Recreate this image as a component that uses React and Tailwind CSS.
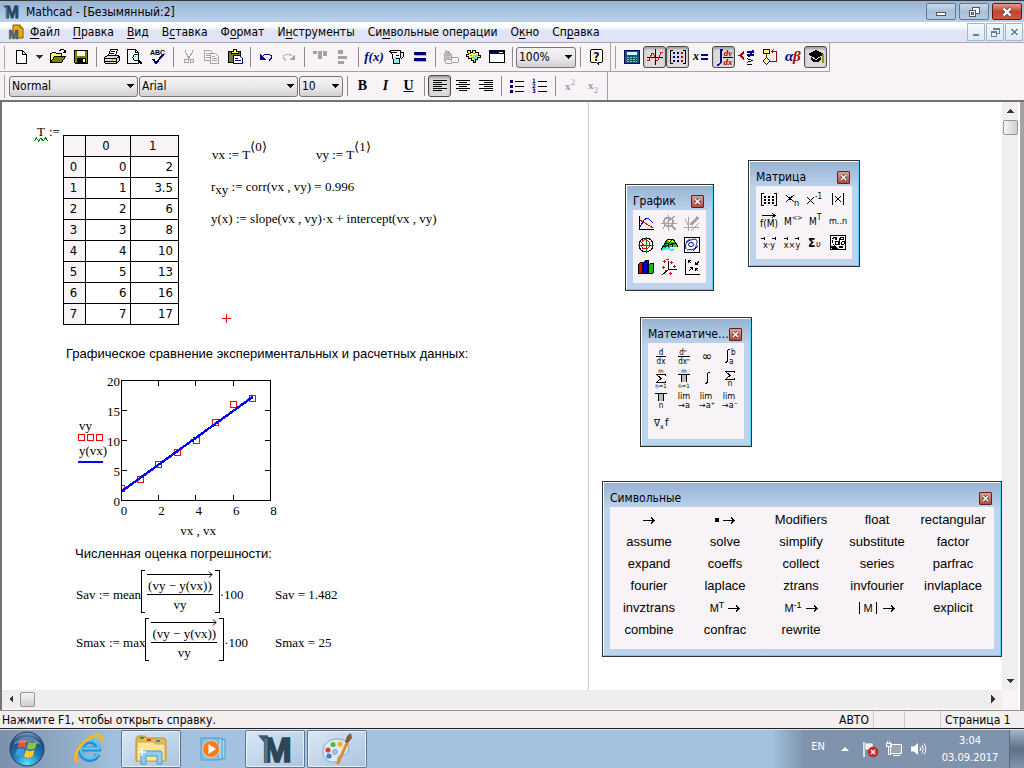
import React from "react";

const UI = "font-['DejaVu_Sans_Condensed','Noto_Sans',sans-serif]";
const MATH = "font-['Liberation_Serif',serif] text-[13px] leading-[16px] whitespace-pre";

/* ---------- drawing helpers ---------- */

function Ico({ w = 18, h = 18, smooth, children }) {
  return (
    <svg
      width={w}
      height={h}
      viewBox={`0 0 ${w} ${h}`}
      fill="none"
      stroke="#000"
      shapeRendering={smooth ? "auto" : "crispEdges"}
      aria-hidden="true"
      className="shrink-0 overflow-visible"
    >
      {children}
    </svg>
  );
}

function T({ x, y, s = 9, f = "DejaVu Sans Condensed", c = "#000", b, i, a, children }) {
  return (
    <text
      x={x}
      y={y}
      fontSize={s}
      fontFamily={`'${f}', sans-serif`}
      fill={c}
      stroke="none"
      fontWeight={b ? 700 : 400}
      fontStyle={i ? "italic" : "normal"}
      textAnchor={a ? "middle" : "start"}
    >
      {children}
    </text>
  );
}

function MathcadLogo({ size }) {
  return (
    <svg width={size} height={size} viewBox="0 0 32 32" aria-hidden="true" className="shrink-0 overflow-visible">
      <path d="M0 3 H9 L12 9 H5 Z" fill="#3f5a6c" />
      <text x="18" y="28" textAnchor="middle" fontFamily="'Liberation Sans', sans-serif" fontWeight="700" fontSize="33" fill="#2c4557" stroke="#2c4557" strokeWidth="1.600">M</text>
      <path d="M6 6 L9 6 V28 H6 Z" fill="#587487" />
    </svg>
  );
}

function Btn({ label, pressed, children }) {
  return (
    <button
      type="button"
      aria-label={label}
      title={label}
      className={
        "flex h-[22px] w-[23px] shrink-0 items-center justify-center " +
        (pressed ? "rounded-[3px] border border-[#4c4a4c] bg-[#dcd9dc] shadow-[inset_0_2px_2px_#a3a1a3]" : "")
      }
    >
      {children}
    </button>
  );
}

function Sep() {
  return (
    <span className="flex h-[20px] w-2 shrink-0 justify-center">
      <span className="w-px bg-[#8d8a8e]" />
    </span>
  );
}

function Grip() {
  return <span className="ml-1 mr-1 h-[23px] w-px shrink-0 bg-[#a5a2a6]" />;
}

function Combo({ label, value, options, className }) {
  return (
    <span className={"relative flex h-[21px] shrink-0 " + className}>
      <select
        aria-label={label}
        defaultValue={value}
        className={
          "h-full w-full appearance-none rounded-[3px] border border-[#77747a] bg-linear-to-b from-[#f4f2f4] via-[#ebe9eb] to-[#d2d0d3] pl-[2px] text-[12px] leading-[18px] text-black outline-none " + UI
        }
      >
        {options.map((o) => (
          <option key={o}>{o}</option>
        ))}
      </select>
      <svg width="8" height="4" viewBox="0 0 8 4" className="pointer-events-none absolute right-[4px] top-[8px]" shapeRendering="crispEdges" aria-hidden="true">
        <path d="M0 0 H8 L4 4 Z" fill="#000" />
      </svg>
    </span>
  );
}

/* ---------- toolbar icons ---------- */

const IconNew = (
  <Ico>
    <path d="M4.5 2.5 H10.5 L14.5 6.5 V15.5 H4.5 Z" fill="#fff" />
    <path d="M10.5 2.5 V6.5 H14.5" />
  </Ico>
);
const IconOpen = (
  <Ico>
    <path d="M1.5 14.5 V5.5 H2.5 L3.5 4.5 H6.5 L7.5 5.5 H12.5 V8.5" fill="#ffff7a" />
    <path d="M1.5 14.5 L5.5 8.5 H16.5 L12.5 14.5 Z" fill="#808000" />
    <path d="M10.5 2.5 L12.5 1.5 H14.5 L16.5 4.5 M14 4.5 H17 M16.5 2 V4" />
  </Ico>
);
const IconSave = (
  <Ico>
    <path d="M2.5 2.5 H15.5 V15.5 H3.5 L2.5 14.5 Z" fill="#808000" />
    <rect x="5" y="3" width="8" height="5" fill="#f7f3f7" stroke="none" />
    <rect x="5" y="10" width="9" height="5" fill="#000" stroke="none" />
    <rect x="11" y="11" width="2" height="3" fill="#fff" stroke="none" />
  </Ico>
);
const IconPrint = (
  <Ico>
    <path d="M5.5 7.5 L7.5 1.5 H14.5 L12.5 7.5 Z" fill="#fff" />
    <path d="M8 3.5 H12 M7 5.5 H11" />
    <path d="M1.5 9.5 L4.5 7.5 H14.5 L16.5 8.5 V12.5 L13.5 15.5 H2.5 L1.5 14.5 Z" fill="#dcdcdc" />
    <path d="M1.5 10.5 H13.5 L16.5 8.5 M13.5 10.5 V15.5 M2 13.5 H13" />
    <rect x="8" y="11" width="3" height="2" fill="#e0d000" stroke="none" />
  </Ico>
);
const IconPreview = (
  <Ico>
    <path d="M1.5 1.5 H9.5 L12.5 4.5 V15.5 H1.5 Z" fill="#fff" />
    <path d="M9.5 1.5 V4.5 H12.5" />
    <circle cx="10" cy="9.5" r="3" fill="#c8ffff" />
    <path d="M12 12 L16 16" strokeWidth="2" />
    <path d="M9 8.5 H10" stroke="#00e0e0" />
  </Ico>
);
const IconSpell = (
  <Ico>
    <T x={1} y={7} s={7} b f="Liberation Sans">ABC</T>
    <path d="M4 11 L7 15 L14 7" stroke="#00008b" strokeWidth="2" />
  </Ico>
);
const IconCut = (
  <Ico>
    <g stroke="#a5a2a6">
      <path d="M5.5 2 V4 L9.5 11 M12.5 2 V4 L8.5 11" />
      <circle cx="6.5" cy="13" r="2" />
      <circle cx="12" cy="13" r="2" />
    </g>
  </Ico>
);
const IconCopy = (
  <Ico>
    <g stroke="#a5a2a6">
      <path d="M1.5 2.5 H7.5 L10.5 5.5 V12.5 H1.5 Z M3 5.5 H7 M3 7.5 H7 M3 9.5 H7" />
      <path d="M7.5 5.5 H12.5 L15.5 8.5 V15.5 H7.5 Z" fill="#f7f3f7" />
      <path d="M9 8.5 H12 M9 10.5 H14 M9 12.5 H14" />
    </g>
  </Ico>
);
const IconPaste = (
  <Ico>
    <rect x="2.5" y="3.5" width="12" height="11" fill="#77773a" />
    <path d="M5.5 5.5 V3.5 H7.5 V1.5 H10.5 V3.5 H12.5 V5.5 Z" fill="#ffff4d" />
    <path d="M7.5 7.5 H13.5 L16.5 10.5 V15.5 H7.5 Z" fill="#fff" stroke="#00008b" />
    <path d="M9 10.5 H12 M9 12.5 H15" stroke="#00008b" />
  </Ico>
);
const IconUndo = (
  <Ico>
    <path d="M6 8 L8 6.5 H12 L14.5 8 V10 L12 12.5" stroke="#00008b" />
    <path d="M3 6 V12 H9 Z" fill="#00008b" stroke="none" />
  </Ico>
);
const IconRedo = (
  <Ico>
    <path d="M12 8 L10 6.5 H6 L3.5 8 V10 L6 12.5" stroke="#b5b2b6" />
    <path d="M15 6 V12 H9 Z" fill="#a5a2a6" stroke="none" />
  </Ico>
);
const IconAlignTop = (
  <Ico>
    <g fill="#a5a2a6" stroke="none">
      <rect x="2" y="3" width="4" height="3" />
      <rect x="7" y="3" width="4" height="8" />
      <rect x="12" y="3" width="4" height="5" />
    </g>
  </Ico>
);
const IconAlignLeft2 = (
  <Ico>
    <g fill="#a5a2a6" stroke="none">
      <rect x="4" y="2" width="5" height="4" />
      <rect x="4" y="8" width="9" height="3" />
      <rect x="4" y="13" width="6" height="3" />
    </g>
  </Ico>
);
const IconFx = (
  <Ico>
    <T x={9} y={13} s={13} b i a f="Liberation Serif" c="#00007b">f(x)</T>
  </Ico>
);
const IconCup = (
  <Ico>
    <path d="M1.5 3.5 L3.500 2.500 H12.5 V4 L11.5 15.5 H5.5 L4.5 6.5 Z" fill="#fff" />
    <path d="M6 9 H11 V15 H6 Z" fill="#8fe8e8" stroke="none" />
    <path d="M12.5 4.5 H15.5 V8.5 L12.5 11.5 M3 4.5 H9 M8 7.5 H11 M8 10.5 H11" />
  </Ico>
);
const IconEq = (
  <Ico>
    <rect x="3" y="4" width="12" height="3" fill="#00007b" stroke="none" />
    <rect x="3" y="10" width="12" height="3" fill="#00007b" stroke="none" />
    <path d="M4 7.5 H16 M4 13.5 H16" stroke="#b5b2b6" />
  </Ico>
);
const IconLink = (
  <Ico>
    <g stroke="#a5a2a6">
      <path d="M2.5 5.5 L4.5 2.5 L9.5 6.5 V12.5 H2.5 Z" fill="#cbc8cc" />
      <path d="M4 5.5 H7 M4 7.5 H8 M4 9.5 H7" />
      <rect x="3.5" y="11.5" width="7" height="4" rx="2" fill="#f7f3f7" />
      <rect x="9.5" y="9.5" width="7" height="5" rx="2" fill="#f7f3f7" />
    </g>
  </Ico>
);
const IconComp = (
  <Ico>
    <path d="M2.5 2.5 H5.5 V4.5 H7.5 V2.5 H10.5 V4.5 H13.5 V7.5 H15.5 V9.5 H12.5 V11.5 H10.5 V14.5 H8.5 V12.5 H6.5 V10.5 H3.5 V8.5 H1.5 V6.5 H3.5 Z" fill="#ffff66" />
    <path d="M8 7 H13 V9 H12 V11 H10 V14 H9 V12 H8 Z" fill="#5fe5e5" stroke="none" />
    <path d="M4 5.5 H6 M8 5.5 H10 M5 7.5 H7 M6 9.5 H8" stroke="#9a9a30" />
  </Ico>
);
const IconWin = (
  <Ico>
    <rect x="1.5" y="2.5" width="15" height="12" fill="#fff" />
    <rect x="2" y="3" width="14" height="3" fill="#00007b" stroke="none" />
    <path d="M11 4.5 H15" stroke="#fff" />
  </Ico>
);
const IconHelp = (
  <Ico>
    <path d="M3.5 2.5 L4.5 1.5 H14.5 L15.500 2.500 V13.5 L14.5 14.5 H12 L11.5 16.5 L9.5 14.5 H4.5 L3.5 13.5 Z" fill="#fff" />
    <path d="M5 3 H14 V13 H5 Z" fill="#ffffc4" stroke="none" />
    <T x={9.5} y={13} s={12} b a c="#00007b">?</T>
  </Ico>
);
const IconCalc = (
  <Ico>
    <rect x="1.5" y="2.5" width="15" height="13" fill="#155a6b" stroke="#00006b" />
    <rect x="4" y="4" width="10" height="3" fill="#c8ffff" stroke="none" />
    <path d="M4 9.5 H14 M4 11.5 H14 M4 13.5 H14" stroke="#62d0d0" strokeDasharray="2 1" />
  </Ico>
);
const IconGraph = (
  <Ico>
    <path d="M9.5 1 V17 M1 9.5 H17" />
    <path d="M1 12.5 H3 L6 5 H7 L10 12 H12 L15 4 H17" stroke="#e00000" />
  </Ico>
);
const IconMatrix = (
  <Ico>
    <path d="M4 2.5 H1.5 V15.5 H4 M14 2.5 H16.5 V15.5 H14" />
    <path d="M5 4 V14" stroke="#00007b" strokeWidth="2" strokeDasharray="2 2" />
    <path d="M9 4 V14" stroke="#00007b" strokeWidth="2" strokeDasharray="2 2" />
    <path d="M13 4 V14" stroke="#b00000" strokeWidth="2" strokeDasharray="2 2" />
  </Ico>
);
const IconXeq = (
  <Ico>
    <T x={1} y={12} s={12} b i f="Liberation Serif">x</T>
    <path d="M9 7 H16 M9 11 H16" stroke="#00007b" strokeWidth="2" />
  </Ico>
);
const IconCalculus = (
  <Ico>
    <path d="M8 1.5 H6.5 L5.5 3 V15 L4 16.5 H2" stroke="#00007b" strokeWidth="2" />
    <T x={13} y={8} s={9} b i a f="Liberation Serif" c="#a00000">dy</T>
    <path d="M8 9.5 H18" />
    <T x={13} y={17} s={9} b i a f="Liberation Serif" c="#a00000">dx</T>
  </Ico>
);
const IconBool = (
  <Ico>
    <path d="M6 4 L2 7.5 L6 11" stroke="#a00000" strokeWidth="2" />
    <path d="M9 4 H16 M9 7 H16 M15 2 L11 9" stroke="#00007b" strokeWidth="1.5" />
    <path d="M9 10.5 L14 12.5 L9 14.5 M9 16.5 H14" />
  </Ico>
);
const IconProg = (
  <Ico>
    <rect x="2.5" y="1.5" width="6" height="4" fill="#ffff7a" stroke="#00007b" />
    <path d="M5.5 6 V10" stroke="#a00000" />
    <path d="M5.5 9.5 L9 13 L5.5 16.5 L2 13 Z" fill="#ffff9a" stroke="#00007b" />
    <path d="M9 13.5 H15.5 V3.5 H11 M12.5 1.5 L10.5 3.5 L12.5 5.5" stroke="#a00000" />
  </Ico>
);
const IconGreek = (
  <Ico>
    <T x={1} y={13} s={15} b i f="Liberation Serif" c="#00007b">α</T>
    <T x={9} y={13} s={15} b i f="Liberation Serif" c="#a00000">β</T>
  </Ico>
);
const IconHat = (
  <Ico>
    <path d="M9 2 L17 6 L9 11 L1 6 Z" fill="#000" stroke="none" />
    <path d="M4 9 V12 L7 14 H11 L14 12 V9 L9 12 Z" fill="#000" stroke="none" />
    <path d="M16 6 V15" stroke="#a09000" strokeWidth="2" />
  </Ico>
);

function Lines({ rows }) {
  return (
    <Ico>
      {rows.map(([x, w], k) => (
        <path key={k} d={`M${x} ${3.5 + k * 2} H${x + w}`} />
      ))}
    </Ico>
  );
}
const IconLeft = <Lines rows={[[2, 14], [2, 9], [2, 14], [2, 9], [2, 14], [2, 9]]} />;
const IconCenter = <Lines rows={[[2, 14], [5, 8], [2, 14], [5, 8], [2, 14], [5, 8]]} />;
const IconRight = <Lines rows={[[2, 14], [7, 9], [2, 14], [7, 9], [2, 14], [7, 9]]} />;
const IconBullets = (
  <Ico>
    <path d="M7 4.5 H16 M7 9.5 H16 M7 14.5 H16" />
    <path d="M2 3 H5 V6 H2 Z M2 8 H5 V11 H2 Z M2 13 H5 V16 H2 Z" fill="#00007b" stroke="none" />
  </Ico>
);
const IconNumbers = (
  <Ico>
    <path d="M7 4.5 H16 M7 9.5 H16 M7 14.5 H16" />
    <T x={1} y={6} s={6} b c="#00007b">1</T>
    <T x={1} y={11} s={6} b c="#00007b">2</T>
    <T x={1} y={16} s={6} b c="#00007b">3</T>
  </Ico>
);
const IconSup = (
  <Ico>
    <T x={3} y={13} s={11} b f="Liberation Serif" c="#9c999d">x</T>
    <T x={9} y={8} s={8} f="Liberation Serif" c="#9c999d">2</T>
  </Ico>
);
const IconSub = (
  <Ico>
    <T x={3} y={12} s={11} b f="Liberation Serif" c="#9c999d">x</T>
    <T x={9} y={16} s={8} f="Liberation Serif" c="#9c999d">2</T>
  </Ico>
);

/* ---------- window chrome ---------- */

function TitleBar() {
  return (
    <header className="flex h-[22px] items-center border-t border-[#3a3a3c] bg-linear-to-b from-[#98b4d4] to-[#bbd1ea] pl-[3px]">
      <MathcadLogo size={16} />
      <h1 className={"ml-[7px] grow text-[12px] leading-[18px] text-black " + UI}>Mathcad - [Безымянный:2]</h1>
      <div className="mr-[2px] flex gap-[3px]">
        <button type="button" aria-label="Свернуть" className="flex h-[17px] w-[30px] items-center justify-center rounded-[2px] border border-[#5f7893] bg-linear-to-b from-[#c9d9ea] via-[#a9bfd8] to-[#b4c9e0]">
          <Ico w={12} h={12}><rect x="1.5" y="6.5" width="9" height="3" fill="#fff" stroke="#555" /></Ico>
        </button>
        <button type="button" aria-label="Восстановить" className="flex h-[17px] w-[30px] items-center justify-center rounded-[2px] border border-[#5f7893] bg-linear-to-b from-[#c9d9ea] via-[#a9bfd8] to-[#b4c9e0]">
          <Ico w={12} h={12}>
            <rect x="4.5" y="1.5" width="7" height="6" fill="#fff" stroke="#555" />
            <rect x="1.5" y="4.5" width="6" height="6" fill="#fff" stroke="#555" />
            <rect x="3.5" y="6.5" width="2" height="2" fill="#a9bfd8" stroke="#555" />
          </Ico>
        </button>
        <button type="button" aria-label="Закрыть" className="flex h-[17px] w-[30px] items-center justify-center rounded-[2px] border border-[#571a15] bg-linear-to-b from-[#e09a8c] via-[#c3442f] to-[#d1583f]">
          <Ico w={12} h={12} smooth>
            <path d="M2.5 2.5 L9.5 9.5 M9.5 2.5 L2.5 9.5" stroke="#555" strokeWidth="4" />
            <path d="M2.5 2.5 L9.5 9.5 M9.5 2.5 L2.5 9.5" stroke="#fff" strokeWidth="2.4" />
          </Ico>
        </button>
      </div>
    </header>
  );
}

const MENU = [
  ["", "Ф", "айл"],
  ["", "П", "равка"],
  ["", "В", "ид"],
  ["В", "с", "тавка"],
  ["Ф", "о", "рмат"],
  ["И", "н", "струменты"],
  ["Си", "м", "вольные операции"],
  ["О", "к", "но"],
  ["Сп", "р", "авка"],
];

function MenuBar() {
  return (
    <nav aria-label="Меню" className="flex h-[21px] items-center border-b border-[#a9a6ab] bg-linear-to-b from-white from-20% via-[#dfe4f6] via-45% to-[#e3e3f7] pl-2">
      <Ico w={16} h={17} smooth>
        <path d="M5 1 H12 L15 4 V14 H5 Z" fill="#f5a800" stroke="#7a5600" />
        <path d="M12 1 V4 H15" stroke="#7a5600" fill="#ffe08a" />
        <text x="5.5" y="15" textAnchor="middle" fontFamily="'Liberation Sans', sans-serif" fontWeight="700" fontSize="12" fill="#3f6377" stroke="#3f6377" strokeWidth="0.6">M</text>
      </Ico>
      <ul className={"flex grow gap-[13px] pl-[6px] text-[12px] leading-[18px] text-black " + UI}>
        {MENU.map(([a, b, c]) => (
          <li key={a + b + c}>
            <button type="button" className="whitespace-pre">
              {a}
              <span className="underline underline-offset-2">{b}</span>
              {c}
            </button>
          </li>
        ))}
      </ul>
      <div className="flex gap-px pr-px">
        {[
          ["Свернуть документ", "M3 9.5 H9 M3 8.5 H9"],
          ["Восстановить документ", "M4.5 4 V2.5 H10.5 V7.5 H8 M4.5 3.5 H10.5 M2.5 5.5 H7.5 V10.5 H2.5 Z M2.5 6.5 H7.5"],
          ["Закрыть документ", "M3 3 L9 9 M9 3 L3 9 M4 3 L10 9 M10 3 L4 9"],
        ].map(([l, d]) => (
          <button key={l} type="button" aria-label={l} className="flex h-[18px] w-[18px] items-center justify-center border border-[#a6b4c6] bg-linear-to-b from-[#f4f9fd] to-[#d9e9f6]">
            <Ico w={12} h={12}><path d={d} stroke="#6c7f92" /></Ico>
          </button>
        ))}
      </div>
    </nav>
  );
}

function Toolbars() {
  return (
    <div className="flex flex-col bg-[#f7f3f7]">
      <div className="flex h-[29px] items-center">
        <div role="toolbar" aria-label="Стандартная" className="flex h-full items-center border-b border-r border-[#a5a2a6] pr-[3px]">
          <Grip />
          <Btn label="Создать">{IconNew}</Btn>
          <button type="button" aria-label="Шаблоны" className="flex h-[22px] w-[14px] shrink-0 items-center justify-center">
            <Ico w={8} h={4}><path d="M0 0 H8 L4 4 Z" fill="#333" stroke="none" /></Ico>
          </button>
          <Btn label="Открыть">{IconOpen}</Btn>
          <Btn label="Сохранить">{IconSave}</Btn>
          <Sep />
          <Btn label="Печать">{IconPrint}</Btn>
          <Btn label="Просмотр">{IconPreview}</Btn>
          <Btn label="Орфография">{IconSpell}</Btn>
          <Sep />
          <Btn label="Вырезать">{IconCut}</Btn>
          <Btn label="Копировать">{IconCopy}</Btn>
          <Btn label="Вставить">{IconPaste}</Btn>
          <Sep />
          <Btn label="Отменить">{IconUndo}</Btn>
          <Btn label="Вернуть">{IconRedo}</Btn>
          <Sep />
          <Btn label="Выровнять поперёк">{IconAlignTop}</Btn>
          <Btn label="Выровнять вниз">{IconAlignLeft2}</Btn>
          <Sep />
          <Btn label="Вставить функцию">{IconFx}</Btn>
          <Btn label="Вставить единицу">{IconCup}</Btn>
          <Btn label="Вычислить">{IconEq}</Btn>
          <Sep />
          <Btn label="Гиперссылка">{IconLink}</Btn>
          <Btn label="Компонент">{IconComp}</Btn>
          <Btn label="Окно">{IconWin}</Btn>
          <Sep />
          <Combo label="Масштаб" value="100%" options={["100%", "150%", "200%"]} className="w-[60px]" />
          <Sep />
          <Btn label="Справка">{IconHelp}</Btn>
        </div>
        <div role="toolbar" aria-label="Математика" className="flex h-full items-center border-b border-r border-[#a5a2a6] pr-[2px]">
          <Grip />
          <Btn label="Калькулятор">{IconCalc}</Btn>
          <Btn label="Графики" pressed>{IconGraph}</Btn>
          <Btn label="Матрицы" pressed>{IconMatrix}</Btn>
          <Btn label="Вычисление">{IconXeq}</Btn>
          <Btn label="Матанализ" pressed>{IconCalculus}</Btn>
          <Btn label="Булева алгебра">{IconBool}</Btn>
          <Btn label="Программирование">{IconProg}</Btn>
          <Btn label="Греческие буквы">{IconGreek}</Btn>
          <Btn label="Символьные" pressed>{IconHat}</Btn>
        </div>
      </div>
      <div className="flex h-[28px] items-center">
        <div role="toolbar" aria-label="Форматирование" className="flex h-full items-center border-r border-[#a5a2a6] pr-[2px]">
          <Grip />
          <div className="flex gap-px">
            <Combo label="Стиль" value="Normal" options={["Normal", "Title"]} className="w-[129px]" />
            <Combo label="Шрифт" value="Arial" options={["Arial", "Times New Roman"]} className="w-[159px]" />
            <Combo label="Размер" value="10" options={["10", "12"]} className="w-[44px]" />
          </div>
          <Sep />
          <Btn label="Полужирный"><b className="font-['Liberation_Serif',serif] text-[14px] leading-4">B</b></Btn>
          <Btn label="Курсив"><b className="font-['Liberation_Serif',serif] text-[14px] leading-4 italic">I</b></Btn>
          <Btn label="Подчёркнутый"><b className="font-['Liberation_Serif',serif] text-[14px] leading-4 underline">U</b></Btn>
          <Sep />
          <Btn label="По левому краю" pressed>{IconLeft}</Btn>
          <Btn label="По центру">{IconCenter}</Btn>
          <Btn label="По правому краю">{IconRight}</Btn>
          <Sep />
          <Btn label="Маркеры">{IconBullets}</Btn>
          <Btn label="Нумерация">{IconNumbers}</Btn>
          <Sep />
          <Btn label="Верхний индекс">{IconSup}</Btn>
          <Btn label="Нижний индекс">{IconSub}</Btn>
        </div>
      </div>
    </div>
  );
}

/* ---------- worksheet ---------- */

const TABLE = [2, 3.5, 6, 8, 10, 13, 16, 17];

function DataTable() {
  return (
    <table className={"w-[116px] border-collapse text-[13px] leading-5 text-black " + UI}>
      <thead>
        <tr className="bg-[#f7f3f7]">
          <td className="w-[22px] border border-black" />
          <th scope="col" className="w-[46px] border border-black p-0 pr-1 font-normal">0</th>
          <th scope="col" className="w-[48px] border border-black p-0 pr-1 font-normal">1</th>
        </tr>
      </thead>
      <tbody>
        {TABLE.map((v, k) => (
          <tr key={k}>
            <th scope="row" className="border border-black bg-[#f7f3f7] p-0 pr-[2px] font-normal">{k}</th>
            <td className="border border-black p-0 pr-1 text-right">{k}</td>
            <td className="border border-black p-0 pr-[5px] text-right">{v}</td>
          </tr>
        ))}
      </tbody>
    </table>
  );
}

function Plot() {
  const px = (x) => 45 + x * 18.7;
  const py = (y) => 126.5 - y * 6;
  const lab = { fontFamily: "'Liberation Serif', serif", fontSize: 13, fill: "#000" };
  return (
    <svg width="206" height="166" viewBox="0 0 206 166" role="img" aria-label="График vy и y(vx)" className="overflow-visible">
      <g shapeRendering="crispEdges" fill="none" stroke="#000">
        <rect x="44.5" y="6.5" width="149" height="120" />
        {[2, 4, 6].map((x) => (
          <path key={x} d={`M${Math.floor(px(x)) - 0.5} 7 v5 m0 109 v5`} />
        ))}
        {[5, 10, 15].map((y) => (
          <path key={y} d={`M45 ${py(y)} h5 m138 0 h5`} />
        ))}
      </g>
      <clipPath id="frame"><rect x="45" y="6" width="150" height="121" /></clipPath>
      <g clipPath="url(#frame)" shapeRendering="crispEdges" fill="none">
        {TABLE.map((v, k) => (
          <rect key={k} x={Math.round(px(k)) - 3.5} y={py(v) - 3} width="6" height="6" stroke="#f00" />
        ))}
        <path d={`M${px(0)} ${py(1.58)} L${px(7)} ${py(17.29)}`} stroke="#00f" strokeWidth="2.4" />
      </g>
      <g shapeRendering="crispEdges" fill="none">
        <path d="M1.5 60.5 h6 v6 h-6 Z M10.5 60.5 h6 v6 h-6 Z M19.5 60.5 h6 v6 h-6 Z" stroke="#f00" />
        <path d="M1 88 H26" stroke="#00f" strokeWidth="2" />
      </g>
      <g {...lab}>
        <text x="2" y="56">vy</text>
        <text x="2" y="81">y(vx)</text>
        {[0, 5, 10, 15, 20].map((y) => (
          <text key={y} x="43" y={py(y) + 5} textAnchor="end">{y}</text>
        ))}
        {[0, 2, 4, 6, 8].map((x) => (
          <text key={x} x={px(x) + 2} y="141" textAnchor="middle">{x}</text>
        ))}
        <text x="121" y="161" textAnchor="middle">vx , vx</text>
      </g>
    </svg>
  );
}

function ErrorFormula({ name, fn }) {
  return (
    <div className={"flex items-center " + MATH}>
      <span className="pt-[6px]">{name} := {fn}</span>
      <div className="flex items-stretch">
        <span className="w-1 border-y border-l border-black" />
        <div className="flex flex-col items-center px-[2px] pt-px">
          <div className="flex w-full items-center">
            <span className="h-px grow bg-black" />
            <svg width="5" height="7" viewBox="0 0 5 7" className="-ml-1" aria-hidden="true">
              <path d="M1 0.5 L4 3.5 L1 6.5" fill="none" stroke="#000" />
            </svg>
          </div>
          <span className="border-b border-black px-px">(vy − y(vx))</span>
          <span className="h-[18px] pt-[2px]">vy</span>
        </div>
        <span className="w-[5px] border-y border-r border-black" />
      </div>
      <span className="pt-[6px]">·100</span>
    </div>
  );
}

function Worksheet() {
  return (
    <article aria-label="Документ" className="absolute inset-0 bg-white text-black">
      <div className="absolute bottom-0 left-[586px] top-0 w-px bg-[#cccacc]" />

      <div className={"absolute left-[32px] top-[22px] flex items-start gap-px " + MATH}>
        <span className="flex flex-col items-center">
          <span className="h-[13px]">T</span>
          <svg width="14" height="5" viewBox="0 0 14 5" shapeRendering="crispEdges" aria-hidden="true">
            <path d="M0 4 L2.500 1 L4.500 4 L7 1 L9 4 L11.500 1 L14 4" fill="none" stroke="#008000" />
          </svg>
        </span>
        <span>:=</span>
      </div>
      <div className="absolute left-[61px] top-[33px]"><DataTable /></div>

      <div className={"absolute left-[210px] top-[45px] " + MATH}>vx := T<sup className="relative -top-2 text-[13px] leading-none">⟨0⟩</sup></div>
      <div className={"absolute left-[314px] top-[45px] " + MATH}>vy := T<sup className="relative -top-2 text-[13px] leading-none">⟨1⟩</sup></div>
      <div className={"absolute left-[209px] top-[77px] " + MATH}>
        r<sub className="text-[13px] leading-none">xy</sub> := corr(vx , vy) = 0.996
      </div>
      <div className={"absolute left-[209px] top-[109px] " + MATH}>y(x) := slope(vx , vy)·x + intercept(vx , vy)</div>

      <div className="absolute left-[220px] top-[212px]">
        <Ico w={9} h={9}><path d="M4.5 0 V9 M0 4.5 H9" stroke="#f00" /></Ico>
      </div>

      <p className="absolute left-[64px] top-[244px] whitespace-nowrap font-['Liberation_Sans',sans-serif] text-[13px] leading-4">
        Графическое сравнение экспериментальных и расчетных данных:
      </p>
      <div className="absolute left-[75px] top-[272px]"><Plot /></div>
      <p className="absolute left-[73px] top-[444px] whitespace-nowrap font-['Liberation_Sans',sans-serif] text-[13px] leading-4">
        Численная оценка погрешности:
      </p>
      <div className="absolute left-[74px] top-[468px]"><ErrorFormula name="Sav" fn="mean" /></div>
      <div className={"absolute left-[273px] top-[485px] " + MATH}>Sav = 1.482</div>
      <div className="absolute left-[74px] top-[516px]"><ErrorFormula name="Smax" fn="max" /></div>
      <div className={"absolute left-[273px] top-[533px] " + MATH}>Smax = 25</div>
    </article>
  );
}

/* ---------- floating palettes ---------- */

function Palette({ title, className, children }) {
  return (
    <section aria-label={title} className={"absolute border border-[#2f3338] " + className}>
      <div className="border border-b-[#57d3f3] border-l-white border-r-[#57d3f3] border-t-white bg-linear-to-b from-[#97b3d2] to-[#bdd3ee] to-[26px] px-[6px] pb-[6px]">
        <div className="flex h-6 items-end justify-between pb-px">
          <h2 className={"truncate text-[12px] leading-4 text-black " + UI}>{title}</h2>
          <button type="button" aria-label="Закрыть" className="mb-px mr-[2px] flex h-[13px] w-[13px] shrink-0 items-center justify-center rounded-[1px] border border-[#5c1f24] bg-linear-to-b from-[#dba095] to-[#b9473b]">
            <Ico w={9} h={9} smooth>
              <path d="M2 2 L7 7 M7 2 L2 7" stroke="#444" strokeWidth="3" />
              <path d="M2 2 L7 7 M7 2 L2 7" stroke="#fff" strokeWidth="1.6" />
            </Ico>
          </button>
        </div>
        {children}
      </div>
    </section>
  );
}

function IconGrid({ items, className }) {
  return (
    <div className={"grid justify-start bg-[#f7f3f7] px-px pt-[2px] " + className}>
      {items.map(([label, icon]) => (
        <button key={label} type="button" aria-label={label} title={label} className="flex h-[22px] w-[23px] items-center justify-center">
          {icon}
        </button>
      ))}
    </div>
  );
}

const GRAPH_ITEMS = [
  ["График X-Y", <Ico><path d="M2.5 2 V15.5 H17" /><path d="M3 6 L16 14" stroke="#e00000" /><path d="M3 13 L7 6 L10 4 L12 5 L16 9" stroke="#0000e0" /></Ico>],
  ["Масштаб", <Ico><g stroke="#a5a2a6"><path d="M8.5 1 V17 M1 9.5 H17" /><circle cx="8.5" cy="8" r="4.5" strokeWidth="2" /><path d="M12 12 L16 16" strokeWidth="2" /><path d="M3 15 L7 8 L15 2" /></g></Ico>],
  ["Трассировка", <Ico><g stroke="#a5a2a6"><path d="M5.5 3 V17 M1 13.5 H16 M2 5 L6 13 L11 14 M8 17 L16 9" /><path d="M8 11 L15 3" strokeWidth="3" /></g></Ico>],
  ["Полярный график", <Ico><circle cx="9" cy="9" r="7" /><path d="M9.5 1 V17 M1 9.5 H17" stroke="#008000" /><path d="M9 9 C3 10 4 3 9 4 C14 5 14 11 9 13 C5 13 4 11 5 9" stroke="#e00000" /></Ico>],
  ["Поверхность", <Ico><path d="M1 14 L5 7 L8 3 H14 L17 8 V11 L12 11 L7 12 Z" fill="#1fc81f" stroke="none" /><path d="M8 3 H14 L16 6 L9 6 Z" fill="#ffff30" stroke="none" /><path d="M1 13 L7 11 L11 13 L14 12 V15 H11 L7 13 L2 15 Z" fill="#40e0f0" stroke="none" /><path d="M1 14 L5 7 L8 3 H13 L17 9 V11 M5 7 L9 7 L13 3 M3 11 L8 9 L15 7 M8 9 V11 M12 8 V11" /></Ico>],
  ["Линии уровня", <Ico><rect x="1.5" y="1.5" width="15" height="15" fill="#fff" /><g stroke="#0000a0" shapeRendering="auto"><ellipse cx="8" cy="8.500" rx="2.500" ry="2" /><path d="M3 13 C1 6 6 4 12 3 C16 4 13 8 13 11 C10 15 6 13 4 14 M10 15 L15 10 M3 6 L7 3" /></g></Ico>],
  ["Трёхмерная диаграмма", <Ico><path d="M1.5 6.5 L3.5 4.5 H5.5 V15.5 H1.5 Z" fill="#e00000" /><path d="M6.5 4.5 L8.5 2.5 H11.5 V15.5 H6.5 Z" fill="#0000e0" /><path d="M11.5 7.5 L13.5 5.5 H16.5 V14.5 L15.5 15.5 H11.5 Z" fill="#10c010" /><path d="M5.5 5 V15 M10.5 4 V15" strokeWidth="2" /></Ico>],
  ["Точечный график", <Ico><path d="M8.5 3 V11.5 H17 M8.5 11.5 L2 17" /><path d="M3 3.5 H6 M4.5 2 V5 M10 4.5 H13 M11.5 3 V6 M2 9.5 H5 M3.5 8 V11 M13 8.5 H16 M14.5 7 V10 M9 15.5 H12 M10.5 14 V17 M6 1.5 H9 M5 12.5 H7" stroke="#e00000" /></Ico>],
  ["Векторное поле", <Ico><path d="M2.5 1 V16.5 H17" /><path d="M5.5 2.5 L8.5 5.5 M5.5 5 V2.5 H8 M16 3.5 L13 6.5 M12.5 4 V6.5 H15 M5.5 13.5 L9.5 9.5 M7 9.5 H9.5 V12 M12.5 10.5 L15.5 13.5 M12.5 13 V10.5 H15" /></Ico>],
];

const MATRIX_ITEMS = [
  ["Матрица или вектор", <Ico><path d="M4 3.5 H1.5 V15.5 H4 M14 3.5 H16.5 V15.5 H14" /><path d="M5 6 V14 M9 6 V14 M13 6 V14" strokeWidth="2" strokeDasharray="2 1" /></Ico>],
  ["Нижний индекс", <Ico><path d="M3 5 L11 12 M11 5 L3 12" /><T x={11} y={16} s={9}>n</T></Ico>],
  ["Обратная матрица", <Ico><path d="M1 7 L8 14 M8 7 L1 14" /><T x={9} y={9} s={8}>-1</T></Ico>],
  ["Определитель", <Ico><path d="M3.5 3 V15 M14.5 3 V15 M6 6 L12 12 M12 6 L6 12" /></Ico>],
  ["Векторизация", <Ico><path d="M2 3.5 H15 M12 1 L15 3.5 L12 6" /><T x={9} y={15} s={10} a>f(M)</T></Ico>],
  ["Столбец матрицы", <Ico><T x={1} y={13} s={10}>M</T><T x={9} y={8} s={7}>&lt;&gt;</T></Ico>],
  ["Транспонирование", <Ico><T x={3} y={13} s={10}>M</T><T x={11} y={8} s={8}>T</T></Ico>],
  ["Диапазон", <Ico><T x={9} y={12} s={9} a>m..n</T></Ico>],
  ["Скалярное произведение", <Ico><path d="M1 4.5 H5 M4 3 V6 M12 4.5 H16 M15 3 V6" /><T x={9} y={14} s={9} a>x·y</T></Ico>],
  ["Векторное произведение", <Ico><path d="M1 4.5 H5 M4 3 V6 M12 4.5 H16 M15 3 V6" /><T x={9} y={14} s={9} a>x×y</T></Ico>],
  ["Сумма вектора", <Ico><T x={2} y={13} s={12} b>Σ</T><T x={10} y={13} s={9}>υ</T></Ico>],
  ["Изображение", <Ico><rect x="1.5" y="1.5" width="15" height="14" fill="#fff" /><path d="M2 12 H6 L9 15 H3 Z M6 3 H8 V6 H6 Z M3 6 H4 V9 H3 Z M10 12 H14 V14 H10 Z" fill="#000" stroke="none" /><circle cx="13" cy="4.5" r="1.500" /><circle cx="8" cy="9" r="2" /><circle cx="14" cy="9" r="1.500" /><path d="M3 5 L6 3 M10 4 V11 M4 10 L6 12" /></Ico>],
];

const SumSign = <path d="M13.5 7 V5.5 H4.5 L9 9.5 L4.5 13.5 H13.5 V12" />;
const ProdSign = (
  <>
    <rect x="7" y="6" width="4" height="7" fill="#bdbabd" stroke="none" />
    <path d="M3 5.5 H15 M6.5 5 V13 M11.5 5 V13" />
  </>
);

const CALC_ITEMS = [
  ["Производная", <Ico><T x={9} y={8} s={8} a>d</T><path d="M4 9.5 H14" /><T x={9} y={17} s={8} a>dx</T></Ico>],
  ["Производная порядка n", <Ico><T x={8} y={8} s={8} a>dⁿ</T><path d="M3 9.5 H15" /><T x={9} y={17} s={8} a>dxⁿ</T></Ico>],
  ["Бесконечность", <Ico><T x={9} y={14} s={14} a>∞</T></Ico>],
  ["Определённый интеграл", <Ico><path d="M9 2.5 H7.5 L6.5 4 V14 L5 15.5 H3.5" /><T x={10} y={8} s={8}>b</T><T x={8} y={17} s={8}>a</T></Ico>],
  ["Сумма", <Ico><T x={9} y={4} s={6} a>m</T>{SumSign}<T x={9} y={19} s={6} a>n=1</T></Ico>],
  ["Произведение", <Ico><T x={9} y={4} s={6} a>m</T>{ProdSign}<T x={9} y={19} s={6} a>n=1</T></Ico>],
  ["Неопределённый интеграл", <Ico><path d="M12 3.5 H10.5 L9.5 5 V13 L8 14.5 H6.5" /></Ico>],
  ["Сумма по диапазону", <Ico><path d="M13.5 4 V2.5 H4.5 L9 6.5 L4.5 10.5 H13.5 V9" /><T x={9} y={17} s={8} a>n</T></Ico>],
  ["Произведение по диапазону", <Ico><rect x="7" y="3" width="4" height="7" fill="#bdbabd" stroke="none" /><path d="M3 2.5 H15 M6.5 2 V10 M11.5 2 V10" /><T x={9} y={17} s={8} a>n</T></Ico>],
  ["Предел", <Ico><T x={9} y={8} s={9} a>lim</T><T x={9} y={17} s={9} a>→a</T></Ico>],
  ["Предел справа", <Ico><T x={8} y={8} s={9} a>lim</T><T x={9} y={17} s={9} a>→a⁺</T></Ico>],
  ["Предел слева", <Ico><T x={8} y={8} s={9} a>lim</T><T x={9} y={17} s={9} a>→a⁻</T></Ico>],
  ["Градиент", <Ico><T x={2} y={13} s={10}>∇</T><T x={8} y={16} s={7}>x</T><T x={13} y={13} s={11}>f</T></Ico>],
];

const SYMBOLIC = [
  "→", "▪ →", "Modifiers", "float", "rectangular",
  "assume", "solve", "simplify", "substitute", "factor",
  "expand", "coeffs", "collect", "series", "parfrac",
  "fourier", "laplace", "ztrans", "invfourier", "invlaplace",
  "invztrans", "MT", "M-1", "|M| →", "explicit",
  "combine", "confrac", "rewrite",
];

const Arrow = (
  <svg width="12" height="7" viewBox="0 0 12 7" aria-hidden="true" shapeRendering="crispEdges">
    <path d="M0 3.5 H11 M8 0.5 L11 3.5 L8 6.5" fill="none" stroke="#000" />
  </svg>
);

function SymbolLabel({ s }) {
  if (s === "→") return Arrow;
  if (s === "▪ →") {
    return (
      <span className="flex items-center gap-1">
        <span className="size-1 bg-black" />
        {Arrow}
      </span>
    );
  }
  if (s === "|M| →") {
    return (
      <span className="flex items-center gap-[6px] text-[11px]">
        <span className="border-x border-black px-[3px] leading-3">M</span>
        {Arrow}
      </span>
    );
  }
  if (s === "MT" || s === "M-1") {
    return (
      <span className="flex items-center gap-1 text-[11px]">
        <span>M<sup className="text-[9px]">{s.slice(1)}</sup></span>
        {Arrow}
      </span>
    );
  }
  return s;
}

function Palettes() {
  return (
    <>
      <Palette title="График" className="left-[623px] top-[82px] w-[89px]">
        <IconGrid items={GRAPH_ITEMS} className="grid-cols-[repeat(3,23px)] pb-[5px]" />
      </Palette>
      <Palette title="Матрица" className="left-[746px] top-[58px] w-[112px]">
        <IconGrid items={MATRIX_ITEMS} className="grid-cols-[repeat(4,23px)] pb-[5px]" />
      </Palette>
      <Palette title="Математический" className="left-[638px] top-[215px] w-[112px]">
        <IconGrid items={CALC_ITEMS} className="grid-cols-[repeat(4,23px)] pb-[6px]" />
      </Palette>
      <Palette title="Символьные" className="left-[600px] top-[379px] w-[400px]">
        <div className="grid grid-cols-5 bg-[#f7f3f7] pb-2 pl-px pr-[3px] pt-[2px] font-['Liberation_Sans',sans-serif] text-[13px] text-black">
          {SYMBOLIC.map((s) => (
            <button key={s} type="button" className="flex h-[22px] items-center justify-center whitespace-nowrap leading-[22px]">
              <SymbolLabel s={s} />
            </button>
          ))}
        </div>
      </Palette>
    </>
  );
}

/* ---------- scroll bars, status, task bar ---------- */

function ScrollArrow({ label, d, className }) {
  return (
    <button type="button" aria-label={label} className={"flex shrink-0 items-center justify-center " + className}>
      <Ico w={8} h={8}><path d={d} fill="#333" stroke="none" /></Ico>
    </button>
  );
}

function StatusBar() {
  return (
    <footer className={"flex h-[19px] items-stretch border-b border-[#1f2327] border-t border-t-[#8d9590] bg-[#f5eeee] text-[12px] leading-[18px] text-black " + UI}>
      <span className="grow pl-[2px]">Нажмите F1, чтобы открыть справку.</span>
      <span className="w-[35px] border-r border-[#cfc9ca]">АВТО</span>
      <span className="w-[31px] border-r border-[#cfc9ca]" />
      <span className="w-9 border-r border-[#cfc9ca]" />
      <span className="w-[83px] pl-1">Страница 1</span>
    </footer>
  );
}

function TaskButton({ label, active, children }) {
  return (
    <button
      type="button"
      aria-label={label}
      title={label}
      className={
        "flex h-[38px] w-[60px] items-center justify-center " +
        (active ? "rounded-[2px] border border-[#5f7690] bg-linear-to-br from-[#dbe7f3] to-[#aac5e0] shadow-[inset_0_0_0_1px_#e6eff8]" : "")
      }
    >
      {children}
    </button>
  );
}

function TaskBar() {
  return (
    <div className="flex h-[39px] items-center border-t border-[#d9e6f2] bg-linear-to-r from-[#7b90aa] via-[#a4c2e0] via-12% to-[#a4c2e0]">
      <button type="button" aria-label="Пуск" className="flex w-[54px] justify-center">
        <svg width="36" height="36" viewBox="0 0 36 36" aria-hidden="true">
          <defs>
            <radialGradient id="orb" cx="50%" cy="95%" r="95%">
              <stop offset="0" stopColor="#5fe0ff" />
              <stop offset="0.45" stopColor="#2378b8" />
              <stop offset="0.8" stopColor="#1b4a7c" />
              <stop offset="1" stopColor="#8ba9c6" />
            </radialGradient>
          </defs>
          <circle cx="18" cy="18" r="17" fill="url(#orb)" stroke="#1c3a5c" />
          <path d="M10 11 C12 9 15 9 18 10.5 L16 17 C13 15.5 11 15.5 8.5 17 Z" fill="#e8562a" />
          <path d="M19.5 11 C22 12 25 12.5 28 11 L26 17.5 C23 19 20 18.5 17.5 17.5 Z" fill="#8cc63f" />
          <path d="M8 18.5 C10.5 17 13 17 15.5 18.5 L13.5 25 C11 23.5 8.5 23.5 6 25 Z" fill="#3f9be8" />
          <path d="M17 19 C19.5 20.5 22.5 20.5 25.5 19 L23.5 25.5 C21 27 18 27 15 25.5 Z" fill="#ffc928" />
          <path d="M4 14 A15 13 0 0 1 32 14 C24 10 12 10 4 14 Z" fill="#fff" opacity="0.3" />
        </svg>
      </button>
      <div className="flex grow gap-[2px] pl-[5px]">
        <TaskButton label="Internet Explorer">
          <svg width="32" height="32" viewBox="0 0 32 32" fill="none" aria-hidden="true">
            <path d="M25 21 A9 9 0 1 1 25.5 16 H9" stroke="#1f8fd8" strokeWidth="5" />
            <path d="M25 20.5 A9 9 0 1 1 26 15.5 H10" stroke="#62c4f5" strokeWidth="2.5" />
            <path d="M5 29 C-2 26 6 12 15 6 C23 1 30 0 29 8" stroke="#f4b91d" strokeWidth="2.8" />
          </svg>
        </TaskButton>
        <TaskButton label="Проводник" active>
          <svg width="34" height="32" viewBox="0 0 34 32" aria-hidden="true">
            <path d="M2 6 L4 3 H11 L12 5 H30 L32 7 V28 H2 Z" fill="#e3b95a" stroke="#b98d2e" />
            <path d="M6 4 H10 V6 H6 Z" fill="#25a032" />
            <path d="M13 6 H17 V8 H13 Z" fill="#d23b2a" />
            <path d="M22 7 H26 V9 H22 Z" fill="#2f7fd0" />
            <path d="M3 9 H19 L21 11 H31 V28 H3 Z" fill="#fbe69c" stroke="#d0a848" />
            <path d="M7 31 V20 Q7 18 9 18 H26 Q28 18 28 20 V31 H23 V23 H12 V31 Z" fill="#8fcdec" stroke="#4a98c6" />
            <path d="M8 15 V23 M4 19 H12" stroke="#fff" strokeWidth="1.5" />
          </svg>
        </TaskButton>
        <TaskButton label="Проигрыватель">
          <svg width="30" height="30" viewBox="0 0 30 30" aria-hidden="true">
            <rect x="3" y="4" width="18" height="22" fill="#7fc1e6" stroke="#4f9bc9" />
            <path d="M21 5 L24 4 V26 L21 25 M24 6 L27 5 V25 L24 24" fill="#a8d8ef" stroke="#4f9bc9" />
            <circle cx="13" cy="15" r="8.5" fill="#f47b20" stroke="#fbd0a8" />
            <path d="M10.5 10 L18 15 L10.5 20 Z" fill="#fff" />
          </svg>
        </TaskButton>
        <TaskButton label="Mathcad" active><MathcadLogo size={34} /></TaskButton>
        <TaskButton label="Paint" active>
          <svg width="34" height="34" viewBox="0 0 34 34" aria-hidden="true">
            <path d="M3 21 C2 12 10 6 19 7 C27 8 30 13 28 19 C26 25 20 22 18 25 C17 28 20 29 15 30 C9 31 4 27 3 21 Z" fill="#dfeaf4" stroke="#7fa5c6" />
            <circle cx="8" cy="18" r="2.6" fill="#e0402a" />
            <circle cx="13" cy="12.5" r="2.6" fill="#5bb83a" />
            <circle cx="20" cy="12" r="2.6" fill="#f5b320" />
            <circle cx="9" cy="24" r="2.6" fill="#2f83d6" />
            <circle cx="15" cy="20" r="2.4" fill="#a9c5de" stroke="#7fa5c6" />
            <path d="M18 31 L27 11" stroke="#e08a2a" strokeWidth="3" strokeLinecap="round" />
            <path d="M25 10 L27 4 L31 1 L32 6 L28 11 Z" fill="#8a5a30" />
          </svg>
        </TaskButton>
      </div>
      <div className={"flex h-full items-center bg-linear-to-r from-[#a4c2e0] to-[#7f93ad] to-[34px] pl-[40px] text-[11px] text-white " + UI}>
        <span className="pb-1">EN</span>
        <button type="button" aria-label="Скрытые значки" className="ml-[14px] flex w-3 justify-center">
          <Ico w={8} h={4} smooth><path d="M0 4 L4 0 L8 4 Z" fill="#fff" stroke="none" /></Ico>
        </button>
        <div className="ml-[10px] flex gap-[6px]">
          <Ico smooth>
            <path d="M3 2 V17" stroke="#fff" strokeWidth="1.5" />
            <path d="M4 3 H12 V10 H4 Z" fill="#f4f4f4" stroke="#777" strokeWidth="0.5" />
            <circle cx="12" cy="12" r="5" fill="#d8291c" stroke="#8c1510" strokeWidth="0.5" />
            <path d="M10 10 L14 14 M14 10 L10 14" stroke="#fff" strokeWidth="1.6" />
          </Ico>
          <Ico>
            <rect x="5.5" y="4.5" width="11" height="9" fill="#9aa6b3" stroke="#fff" />
            <path d="M8 15.5 H15 M1 3.5 H6 V6.5 H1 Z M3.5 7 V14 H6 M2.5 1 V3 M4.5 1 V3" stroke="#fff" />
          </Ico>
          <Ico smooth>
            <path d="M2 6.5 H5 L9 3 V15 L5 11.5 H2 Z" fill="#fff" stroke="none" />
            <path d="M11 7 Q12.5 9 11 11 M13 5 Q15.5 9 13 13 M15 3.5 Q18.5 9 15 14.5" stroke="#fff" />
          </Ico>
        </div>
        <div className="ml-[9px] flex w-[68px] flex-col items-center leading-[17px]">
          <span>3:04</span>
          <span>03.09.2017</span>
        </div>
        <button type="button" aria-label="Показать рабочий стол" className="ml-[5px] h-full w-[15px] border-l border-[#56697f] bg-linear-to-b from-[#a5b5c8] via-[#5f7186] to-[#8295ab]" />
      </div>
    </div>
  );
}

export default function App() {
  return (
    <div className="flex min-h-screen flex-col bg-[#f7f3f7]">
      <TitleBar />
      <MenuBar />
      <Toolbars />
      <div className="flex min-h-[588px] grow border-t-2 border-[#747276]">
        <main className="flex grow flex-col border-l-2 border-[#747276]">
          <div className="flex grow">
            <div className="relative grow">
              <Worksheet />
              <Palettes />
            </div>
            <div className="flex w-4 flex-col items-center bg-[#f1eef1]">
              <ScrollArrow label="Вверх" d="M4 2 L8 6 H0 Z" className="h-[18px] w-4" />
              <button type="button" aria-label="Ползунок по вертикали" className="h-[15px] w-[15px] rounded-[2px] border border-[#98959a] bg-linear-to-r from-[#f7f6f7] to-[#cfcdd0]" />
              <span className="grow" />
              <ScrollArrow label="Вниз" d="M0 2 H8 L4 6 Z" className="h-[18px] w-4" />
            </div>
          </div>
          <div className="flex h-5 items-center border-b-2 border-[#f7f3f7] bg-[#efedee]">
            <ScrollArrow label="Влево" d="M6 0 V8 L2 4 Z" className="h-4 w-[18px]" />
            <button type="button" aria-label="Ползунок по горизонтали" className="h-[15px] w-[15px] rounded-[2px] border border-[#98959a] bg-linear-to-b from-[#f7f6f7] to-[#cfcdd0]" />
            <span className="grow" />
            <ScrollArrow label="Вправо" d="M2 0 V8 L6 4 Z" className="h-4 w-[18px]" />
            <span className="h-full w-4 bg-[#f7f3f7]" />
          </div>
        </main>
        <div className="w-[6px] border-l-2 border-white bg-[#a5a2a6]" />
      </div>
      <StatusBar />
      <TaskBar />
    </div>
  );
}
